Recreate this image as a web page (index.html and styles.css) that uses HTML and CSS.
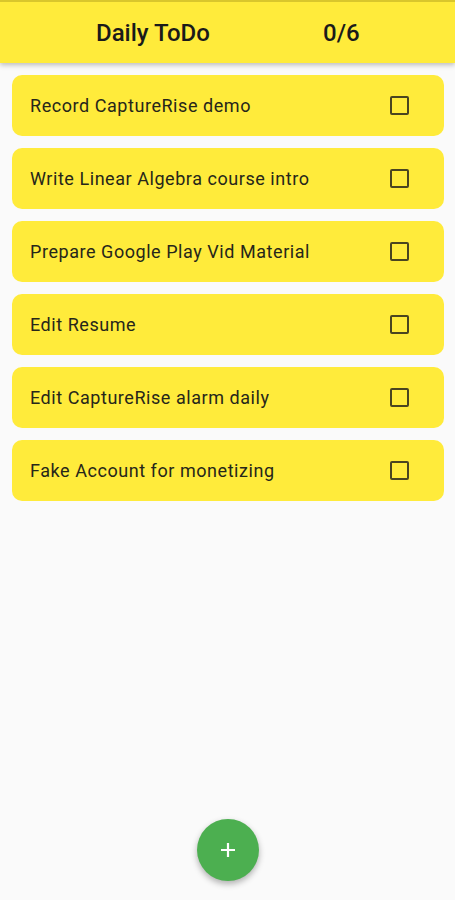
FILE: index.html
```html
<!DOCTYPE html>
<html lang="en">
<head>
    <meta charset="UTF-8">
    <meta name="viewport" content="width=device-width, initial-scale=1.0">
    <title>Daily ToDo</title>
    <link rel="stylesheet" href="styles.css">
</head>
<body>
    <header class="app-bar">
        <h1 class="title">Daily ToDo</h1>
        <span class="counter">0/6</span>
    </header>

    <!-- todo list -->
    <ul class="todo-list">
        <li class="todo"><span class="todo-text">Record CaptureRise demo</span><span class="check"></span></li>
        <li class="todo"><span class="todo-text">Write Linear Algebra course intro</span><span class="check"></span></li>
        <li class="todo"><span class="todo-text">Prepare Google Play Vid Material</span><span class="check"></span></li>
        <li class="todo"><span class="todo-text">Edit Resume</span><span class="check"></span></li>
        <li class="todo"><span class="todo-text">Edit CaptureRise alarm daily</span><span class="check"></span></li>
        <li class="todo"><span class="todo-text">Fake Account for monetizing</span><span class="check"></span></li>
    </ul>

    <button class="fab" aria-label="Add">
        <svg width="18" height="18" viewBox="0 0 18 18">
            <path d="M9 2v14M2 9h14" stroke="#fff" stroke-width="2.2" fill="none"/>
        </svg>
    </button>
</body>
</html>
```

FILE: styles.css
```css
body {
    font-family: Roboto, "Noto Sans", sans-serif;
    background-color: #fafafa;
    margin: 0;
    height: 900px;
    position: relative;
    overflow: hidden;
}

.app-bar {
    background-color: #ffeb3b;
    border-top: 2px solid #d9c62c;
    height: 61px;
    display: flex;
    align-items: center;
    box-shadow: 0 2px 5px rgba(0, 0, 0, 0.25);
}

.title {
    margin: 0 0 0 96px;
    font-size: 24px;
    font-weight: 500;
    color: #1a1a1a;
    width: 227px;
}

.counter {
    font-size: 24px;
    font-weight: 500;
    color: #1a1a1a;
}

.todo-list {
    list-style: none;
    margin: 0;
    padding: 12px 11px 0 12px;
    display: flex;
    flex-direction: column;
    gap: 12px;
}

.todo {
    background-color: #ffeb3b;
    border-radius: 10px;
    height: 61px;
    display: flex;
    align-items: center;
    padding: 0 35px 0 18px;
}

.todo-text {
    flex: 1;
    font-size: 18px;
    letter-spacing: 0.55px;
    color: #26261a;
}

.check {
    width: 15px;
    height: 15px;
    border: 2px solid #4a4520;
    border-radius: 2px;
}

.fab {
    position: absolute;
    left: 197px;
    top: 819px;
    width: 62px;
    height: 62px;
    border-radius: 50%;
    border: none;
    background-color: #4caf50;
    box-shadow: 0 3px 6px rgba(0, 0, 0, 0.3);
    display: flex;
    align-items: center;
    justify-content: center;
    cursor: pointer;
}
```
